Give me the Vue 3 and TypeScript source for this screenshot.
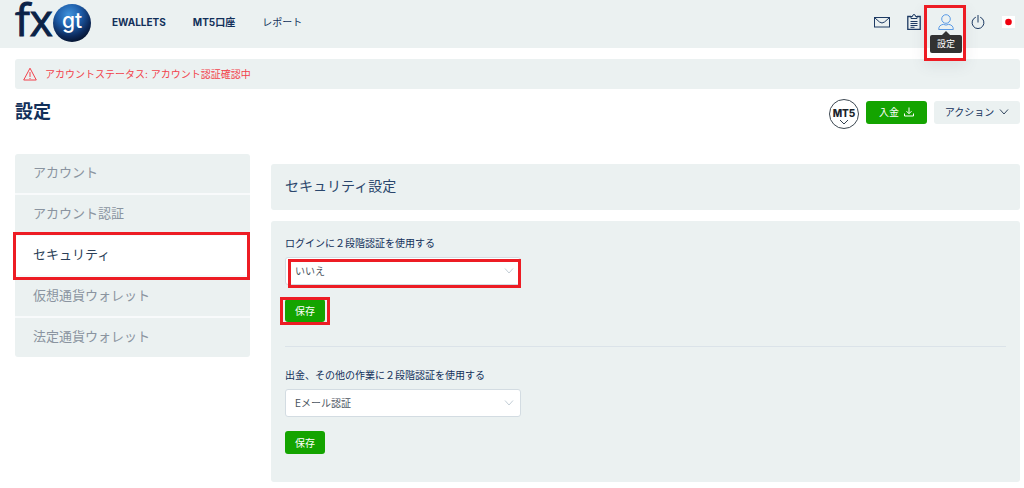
<script setup lang="ts">
import { ref } from 'vue'

interface SettingGroup {
  id: string
  label: string
  value: string
  options: string[]
  marked: boolean
}

const sections: string[] = ['アカウント', 'アカウント認証', 'セキュリティ', '仮想通貨ウォレット', '法定通貨ウォレット']
const active = ref('セキュリティ')

const groups = ref<SettingGroup[]>([
  {
    id: 'login-2fa',
    label: 'ログインに２段階認証を使用する',
    value: 'いいえ',
    options: ['いいえ', 'Eメール認証'],
    marked: true,
  },
  {
    id: 'action-2fa',
    label: '出金、その他の作業に２段階認証を使用する',
    value: 'Eメール認証',
    options: ['いいえ', 'Eメール認証'],
    marked: false,
  },
])
</script>

<template>
  <div class="page">
    <header class="topbar">
      <a class="logo" href="#" aria-label="fxgt">
        <svg width="78" height="44" viewBox="0 0 78 44">
          <defs>
            <radialGradient id="ball" cx="42%" cy="28%" r="72%">
              <stop offset="0" stop-color="#3f93dc" />
              <stop offset="0.45" stop-color="#1d5ca8" />
              <stop offset="0.8" stop-color="#0c2a5c" />
              <stop offset="1" stop-color="#061634" />
            </radialGradient>
          </defs>
          <text class="logo-fx" x="0" y="36">fx</text>
          <circle cx="57" cy="23" r="19" fill="url(#ball)" />
          <text class="logo-gt" x="57" y="28" text-anchor="middle">gt</text>
        </svg>
      </a>
      <nav class="menu">
        <a href="#">EWALLETS</a>
        <a href="#">MT5口座</a>
        <a href="#" class="plain">レポート</a>
      </nav>
      <div class="tools">
        <a href="#" aria-label="mail">
          <svg width="16" height="16" viewBox="0 0 16 16" fill="none" stroke="#1d3a63">
            <rect x="0.5" y="3.5" width="15" height="9.5" />
            <path d="M1 4l4.500 4q2.500 2 5 0L15 4" />
          </svg>
        </a>
        <a href="#" aria-label="clipboard">
          <svg width="14" height="16" viewBox="0 0 14 16" fill="none" stroke="#1d3a63">
            <path d="M4 2.500H.8v13h12.400v-13H10" stroke-width="1.300" />
            <path d="M4 4.500v-2h1.500Q5.500.5 7 .5t1.500 2H10v2z" />
            <path d="M3.500 7.500h7M3.500 9.500h7M3.500 11.500h7" />
            <path d="M3.500 13.300h4" />
          </svg>
        </a>
        <a href="#" class="user" aria-label="設定">
          <svg width="16" height="16" viewBox="0 0 16 16" fill="none" stroke="#5b9be6">
            <circle cx="8" cy="5" r="4.300" />
            <path d="M.7 15.500c0-3 1.300-4.500 4.600-5.200q2.700 1.600 5.400 0c3.300.7 4.600 2.200 4.600 5.200z" />
          </svg>
          <span class="tip">設定</span>
          <span class="mark mark-user"></span>
        </a>
        <a href="#" aria-label="power">
          <svg width="14" height="16" viewBox="0 0 14 16" fill="none" stroke="#1d3a63">
            <path d="M4.800 3.200a5.900 5.900 0 1 0 4.400 0M7 1v7.500" />
          </svg>
        </a>
        <a href="#" aria-label="日本語">
          <svg width="13" height="12" viewBox="0 0 13 12">
            <rect width="13" height="12" fill="#fff" />
            <circle cx="6.500" cy="6" r="3.300" fill="#f0000e" />
          </svg>
        </a>
      </div>
    </header>

    <main class="body">
      <div class="alert" role="alert">
        <svg width="14" height="14" viewBox="0 0 14 14" fill="none" stroke="#f2414b">
          <path d="M7 1.200L13.300 13H.7z" />
          <path d="M7 5v5M7 11v1" />
        </svg>
        <span>アカウントステータス: アカウント認証確認中</span>
      </div>

      <div class="heading">
        <h1>設定</h1>
        <div class="actions">
          <button type="button" class="mt5">
            <span>MT5</span>
            <svg width="10" height="6" viewBox="0 0 10 6" fill="none" stroke="#33414f"><path d="M1 1l4 4 4-4" /></svg>
          </button>
          <button type="button" class="deposit">
            入金
            <svg width="10" height="10" viewBox="0 0 10 10" fill="none" stroke="#fff">
              <path d="M5 .5v6M2.500 4.200L5 6.700l2.500-2.500M.5 6.500v2.500h9v-2.500" />
            </svg>
          </button>
          <button type="button" class="more">
            アクション
            <svg width="10" height="6" viewBox="0 0 10 6" fill="none" stroke="#33475f"><path d="M1 .5l4 4.500 4-4.500" /></svg>
          </button>
        </div>
      </div>

      <div class="columns">
        <nav class="side">
          <a
            v-for="s in sections"
            :key="s"
            href="#"
            :class="{ active: s === active }"
            @click.prevent="active = s"
          >{{ s }}<span v-if="s === 'セキュリティ'" class="mark mark-side"></span></a>
        </nav>

        <div class="content">
          <h2 class="card title">セキュリティ設定</h2>
          <div class="card form">
            <section v-for="g in groups" :key="g.id" class="group">
              <label :for="g.id">{{ g.label }}</label>
              <div class="field">
                <select :id="g.id" v-model="g.value">
                  <option v-for="o in g.options" :key="o">{{ o }}</option>
                </select>
                <svg width="10" height="6" viewBox="0 0 10 6" fill="none" stroke="#c3ced6"><path d="M1 .5l4 4.500 4-4.500" /></svg>
                <span v-if="g.marked" class="mark mark-field"></span>
              </div>
              <button type="button" class="save">
                保存<span v-if="g.marked" class="mark mark-save"></span>
              </button>
            </section>
          </div>
        </div>
      </div>
    </main>
  </div>
</template>

<style>
body {
  margin: 0;
  background: #fff;
}
</style>

<style scoped>
.page {
  font-family: Inter, 'Noto Sans CJK JP', sans-serif;
  font-size: 10px;
  line-height: 14px;
  color: #12305a;
}
.page * {
  box-sizing: border-box;
}
svg {
  display: block;
  flex: none;
}
a {
  color: inherit;
  text-decoration: none;
}
button {
  font: inherit;
  border: 0;
  padding: 0;
  cursor: pointer;
}
.topbar {
  display: flex;
  align-items: center;
  height: 48px;
  padding: 0 9px 4px 15px;
  background: #ebf1f1;
}
.logo svg {
  overflow: visible;
}
.logo-fx {
  font: 400 44px 'Open Sans', sans-serif;
  fill: #0b2347;
  stroke: #0b2347;
  stroke-width: 1px;
}
.logo-gt {
  font: 500 21px Inter, sans-serif;
  fill: #fff;
}
.menu {
  display: flex;
  gap: 27px;
  margin-left: 19px;
  font-weight: 700;
}
.menu .plain {
  font-weight: 400;
}
.tools {
  display: flex;
  align-items: center;
  gap: 17px;
  margin-left: auto;
}
.user {
  position: relative;
}
.tip {
  position: absolute;
  z-index: 2;
  top: 21px;
  left: -8px;
  width: 32px;
  height: 18px;
  border-radius: 2px;
  background: #323232;
  color: #fff;
  font-size: 9px;
  line-height: 18px;
  text-align: center;
}
.tip::before {
  content: '';
  position: absolute;
  top: -4px;
  left: 12px;
  border: 4px solid transparent;
  border-top: 0;
  border-bottom-color: #323232;
}
.mark {
  position: absolute;
  border: 3px solid #ed1c24;
  pointer-events: none;
}
.mark-user {
  z-index: 1;
  top: -9px;
  left: -14px;
  width: 42px;
  height: 56px;
  box-shadow: 0 5px 14px rgba(80, 90, 110, 0.1);
}
.body {
  padding: 11px 4px 6px 15px;
}
.alert {
  display: flex;
  align-items: center;
  gap: 8px;
  height: 30px;
  padding: 0 8px;
  border-radius: 3px;
  background: #ebf1f1;
  color: #f2414b;
}
.heading {
  display: flex;
  align-items: center;
  justify-content: space-between;
  height: 30px;
  margin-top: 8px;
}
h1 {
  margin: 0;
  font-size: 18px;
  line-height: 26px;
  font-weight: 700;
}
.actions {
  display: flex;
  align-items: center;
  gap: 7px;
  height: 30px;
}
.mt5 {
  display: flex;
  flex-direction: column;
  align-items: center;
  width: 30px;
  height: 30px;
  margin-top: 4px;
  padding-top: 7px;
  border: 1px solid #3d4852;
  border-radius: 50%;
  background: #fff;
  color: #1c242c;
}
.mt5 span {
  font-size: 10px;
  line-height: 12px;
  font-weight: 800;
}
.deposit,
.more {
  display: flex;
  align-items: center;
  justify-content: center;
  gap: 5px;
  height: 23px;
  border-radius: 3px;
}
.deposit {
  width: 61px;
  background: #14a400;
  color: #fff;
}
.more {
  width: 86px;
  background: #ebf1f1;
  color: #12305a;
}
.columns {
  display: grid;
  grid-template-columns: 235px 1fr;
  gap: 21px;
  align-items: start;
  margin-top: 27px;
}
.side {
  border-radius: 3px;
  background: #ebf1f1;
}
.side a {
  position: relative;
  display: block;
  height: 41px;
  padding: 0 18px;
  border-bottom: 2px solid #f8fafb;
  color: #8a94a0;
  font-size: 13px;
  line-height: 37px;
}
.side a:last-child {
  height: 39px;
  border-bottom: 0;
}
.side a.active {
  background: #fff;
  color: #2b3f58;
}
.mark-side {
  top: -4px;
  left: -2px;
  right: 0;
  height: 48px;
}
.content {
  padding-top: 10px;
}
.card {
  border-radius: 3px;
  background: #ebf1f1;
}
.title {
  margin: 0 0 11px;
  padding: 11px 14px 13px;
  font-size: 14px;
  line-height: 22px;
  font-weight: 400;
  color: #2a466c;
}
.form {
  padding: 15px 14px 28px;
}
.group + .group {
  margin-top: 24px;
  padding-top: 21px;
  border-top: 1px solid #dbe3e9;
}
label {
  display: block;
}
.field {
  position: relative;
  width: 236px;
  margin: 7px 0 14px;
}
.field select {
  display: block;
  width: 100%;
  height: 28px;
  padding: 0 9px;
  border: 1px solid #d3dce2;
  border-radius: 3px;
  background: #fff;
  color: #4b5561;
  font: inherit;
  appearance: none;
}
.field svg {
  position: absolute;
  top: 11px;
  right: 7px;
  pointer-events: none;
}
.mark-field {
  top: 2px;
  left: 3px;
  right: 0;
  height: 29px;
}
.save {
  position: relative;
  display: block;
  width: 40px;
  height: 23px;
  border-radius: 3px;
  background: #14a400;
  color: #fff;
}
.mark-save {
  top: -2px;
  left: -5px;
  width: 50px;
  height: 28px;
}
</style>
